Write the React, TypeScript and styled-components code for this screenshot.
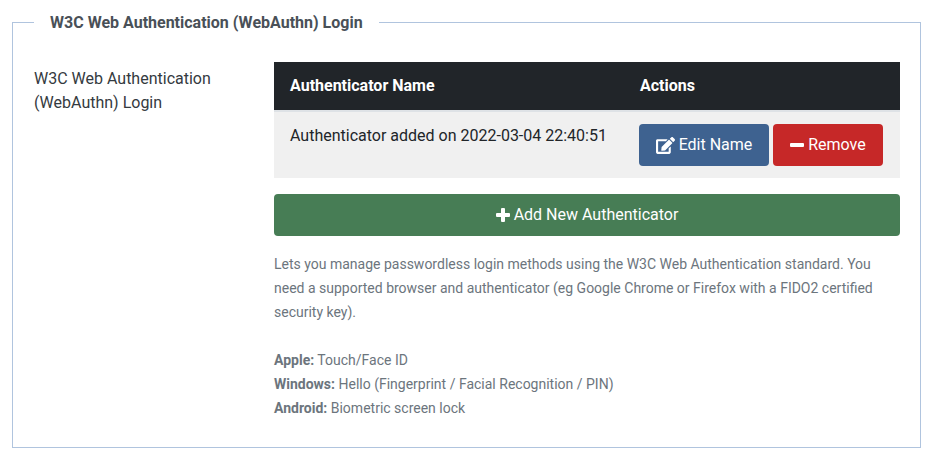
import { createGlobalStyle, styled } from 'styled-components';
import { FaEdit } from 'react-icons/fa';

const GlobalStyle = createGlobalStyle`
  html, body {
    margin: 0;
    background: #fff;
    font-family: Roboto, "Liberation Sans", sans-serif;
    font-size: 16px;
    line-height: 24px;
    color: #212529;
  }
  * {
    box-sizing: border-box;
  }
`;

const Page = styled.div`
  padding: 9px 10px 10px 12px;
`;
const Group = styled.fieldset`
  margin: 0;
  min-width: 0;
  padding: 27px 20px 27px 21px;
  border: 1px solid #b0c4de;
`;
const Legend = styled.legend`
  margin: 0;
  padding: 2px 16px 0;
  font-size: 16px;
  font-weight: 700;
  line-height: 24px;
  color: #495057;
`;
const FormRow = styled.div`
  display: grid;
  grid-template-columns: 240px 626px;
`;
const FieldLabel = styled.label`
  display: block;
  width: 200px;
  padding-top: 5px;
  color: #343a40;
`;
const Table = styled.table`
  width: 100%;
  table-layout: fixed;
  border-collapse: collapse;
`;
const HeadCell = styled.th`
  padding: 12px 16px;
  background: #212529;
  border-bottom: 2px solid #dee2e6;
  color: #fff;
  font-weight: 700;
  text-align: left;
`;
const NameHead = styled(HeadCell)`
  width: 350px;
`;
const Cell = styled.td`
  height: 66px;
  padding: 12px 16px;
  background: #f0f0f0;
  vertical-align: top;
`;
const ActionCell = styled(Cell)`
  padding-left: 15px;
  white-space: nowrap;
`;
const Actions = styled.div`
  display: flex;
  gap: 4px;
`;
const Button = styled.button<{ $tone: string; $width?: number }>`
  display: flex;
  align-items: center;
  justify-content: center;
  gap: 4px;
  width: ${(p) => (p.$width ? `${p.$width}px` : '100%')};
  height: 42px;
  padding: 0;
  border: 0;
  border-radius: 4px;
  background: ${(p) => p.$tone};
  color: #fff;
  font: inherit;
`;
const AddButton = styled(Button)`
  margin-top: 16px;
`;
const Help = styled.div`
  margin-top: 16px;
  font-size: 14px;
  line-height: 24px;
  color: #6c757d;
`;
const Paragraph = styled.p`
  margin: 0 0 24px;
`;

const MinusIcon = () => (
  <svg width="14" height="14" viewBox="0 0 14 14" fill="currentColor">
    <rect x="0" y="5" width="14" height="4" rx="1" />
  </svg>
);

const PlusIcon = () => (
  <svg width="14" height="14" viewBox="0 0 14 14" fill="currentColor">
    <rect x="0" y="5" width="14" height="4" rx="1" />
    <rect x="5" y="0" width="4" height="14" rx="1" />
  </svg>
);

const App = () => (
  <Page>
    <GlobalStyle />
    <Group>
      <Legend>W3C Web Authentication (WebAuthn) Login</Legend>
      <FormRow>
        <FieldLabel>W3C Web Authentication (WebAuthn) Login</FieldLabel>
        <div>
          <Table>
            <thead>
              <tr>
                <NameHead>Authenticator Name</NameHead>
                <HeadCell>Actions</HeadCell>
              </tr>
            </thead>
            <tbody>
              <tr>
                <Cell>Authenticator added on 2022-03-04 22:40:51</Cell>
                <ActionCell>
                  <Actions>
                    <Button $tone="#3e6290" $width={130}>
                      <FaEdit size={19} /> Edit Name
                    </Button>
                    <Button $tone="#c62828" $width={110}>
                      <MinusIcon /> Remove
                    </Button>
                  </Actions>
                </ActionCell>
              </tr>
            </tbody>
          </Table>
          <AddButton $tone="#477d55">
            <PlusIcon /> Add New Authenticator
          </AddButton>
          <Help>
            <Paragraph>
              Lets you manage passwordless login methods using the W3C Web Authentication standard. You need a supported browser and authenticator (eg Google Chrome or Firefox with a FIDO2 certified security key).
            </Paragraph>
            <div><b>Apple:</b> Touch/Face ID</div>
            <div><b>Windows:</b> Hello (Fingerprint / Facial Recognition / PIN)</div>
            <div><b>Android:</b> Biometric screen lock</div>
          </Help>
        </div>
      </FormRow>
    </Group>
  </Page>
);

export default App;
